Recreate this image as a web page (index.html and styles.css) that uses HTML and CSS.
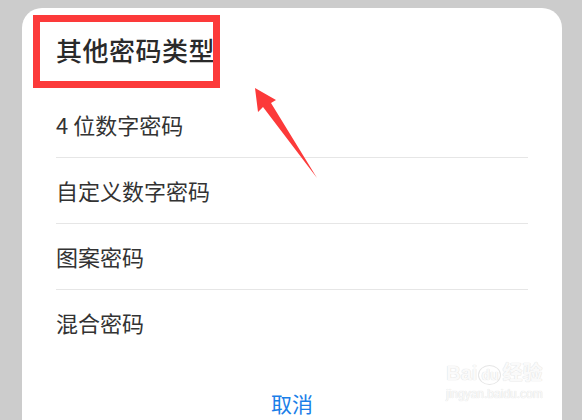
FILE: index.html
```html
<!DOCTYPE html>
<html lang="zh-CN">
<head>
    <meta charset="UTF-8">
    <meta name="viewport" content="width=device-width, initial-scale=1.0">
    <title>其他密码类型</title>
    <link rel="stylesheet" href="styles.css">
</head>
<body>
<!-- 底部弹出的选择面板 -->
<div class="sheet">
    <h2 class="sheet-title">其他密码类型</h2>
    <ul class="options">
        <li>4 位数字密码</li>
        <li>自定义数字密码</li>
        <li>图案密码</li>
        <li>混合密码</li>
    </ul>
    <a href="#" class="cancel">取消</a>
</div>

<!-- 标注：红框和箭头 -->
<div class="mark-box"></div>
<svg class="mark-arrow" width="582" height="420" viewBox="0 0 582 420">
    <path d="M255 88 L276 100 L271 103 L317 178 L263 107 L258 112 Z" fill="#fc3a3a"/>
</svg>

<!-- 水印 -->
<div class="watermark">
    <span class="wm-logo">Bai<span class="wm-du">du</span>经验</span>
    <span class="wm-url">jingyan.baidu.com</span>
</div>
</body>
</html>
```
FILE: styles.css
```css
/* 基础 */
body {
    margin: 0;
    padding: 0;
    background-color: #cccccc;
    font-family: "Noto Sans CJK SC", "Noto Sans", sans-serif;
    color: #333;
    height: 420px;
    overflow: hidden;
}

.sheet {
    margin: 8px 20px 0 22px;
    height: 412px;
    background-color: #fff;
    border-radius: 20px 20px 0 0;
    padding: 0 34px;
    box-sizing: border-box;
    display: flex;
    flex-direction: column;
}

.sheet-title {
    margin: 0;
    height: 84px;
    line-height: 84px;
    font-size: 26px;
    font-weight: 500;
    color: #2a2a2a;
    letter-spacing: 0.5px;
}

.options {
    list-style: none;
    margin: 0;
    padding: 0;
}

.options li {
    height: 65px;
    line-height: 65px;
    font-size: 22px;
    color: #333;
    border-bottom: 1px solid #e6e6e6;
}

.options li:last-child {
    border-bottom: none;
    height: 66px;
}

.cancel {
    display: block;
    margin-top: 32px;
    text-align: center;
    font-size: 21px;
    line-height: 30px;
    color: #1a7ee8;
    text-decoration: none;
}

/* 标注 */
.mark-box {
    position: absolute;
    left: 33px;
    top: 15px;
    width: 173px;
    height: 59px;
    border: 7px solid #fc3a3a;
}

.mark-arrow {
    position: absolute;
    left: 0;
    top: 0;
}

/* 水印 */
.watermark {
    position: absolute;
    left: 446px;
    top: 360px;
    display: flex;
    flex-direction: column;
    align-items: center;
    white-space: nowrap;
    color: #fafafa;
    font-family: "Liberation Sans", "Noto Sans CJK SC", sans-serif;
    text-shadow: 0 0 1px #e0e0e0, 0 0 1px #e0e0e0;
}

.wm-logo {
    font-size: 20px;
    font-weight: bold;
    line-height: 26px;
}

.wm-du {
    display: inline-block;
    font-size: 14px;
    line-height: 18px;
    border: 1px solid #e6e6e6;
    border-radius: 50%;
    padding: 0 2px;
    margin: 0 1px;
}

.wm-url {
    font-size: 12px;
    line-height: 16px;
}
```
